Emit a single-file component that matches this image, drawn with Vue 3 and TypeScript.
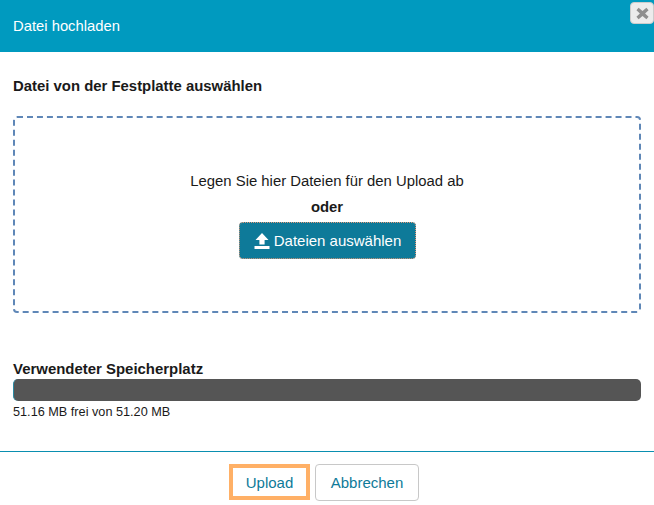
<script setup lang="ts">
const title = 'Datei hochladen'
</script>

<template>
  <div class="modal">
    <header class="head">
      <h1>{{ title }}</h1>
      <button class="close" aria-label="Schließen">
        <svg width="13" height="13" viewBox="0 0 12 12"><path d="M2.4.8 6 3.8 9.6.8 11.6 3 8.4 6l3.2 3-2 2.2L6 8.2l-3.6 3L.4 9l3.2-3L.4 3Z" fill="#8f8f8f"/></svg>
      </button>
    </header>
    <main class="body">
      <h2>Datei von der Festplatte auswählen</h2>
      <section class="drop">
        <p class="hint">Legen Sie hier Dateien für den Upload ab</p>
        <p class="or">oder</p>
        <button class="pick">
          <svg width="16" height="16" viewBox="0 0 16 16"><path d="M8 0 14.5 7H10.6V11.5H5.4V7H1.5Z M.5 13H15.5V16H.5Z" fill="#fff"/></svg>
          <span>Dateien auswählen</span>
        </button>
      </section>
      <h3>Verwendeter Speicherplatz</h3>
      <div class="bar"></div>
      <p class="free">51.16 MB frei von 51.20 MB</p>
    </main>
    <footer class="foot">
      <button class="btn focus">Upload</button>
      <button class="btn">Abbrechen</button>
    </footer>
  </div>
</template>

<style>
html, body { margin: 0; background: #fff; }
</style>

<style scoped>
.modal {
  position: relative;
  width: 654px;
  height: 505px;
  overflow: hidden;
  font-family: "Liberation Sans", Arial, sans-serif;
  color: #1a1a1a;
  background: #fff;
}
.head {
  height: 52px;
  background: #009abf;
  display: flex;
  align-items: center;
  padding: 0 13px;
}
.head h1 {
  margin: 0;
  font-size: 14.8px;
  font-weight: 400;
  color: #fff;
}
.close {
  position: absolute;
  top: 2px;
  right: 0;
  width: 24px;
  height: 22px;
  padding: 0;
  border: 1px solid #ccc;
  border-radius: 4px;
  background: #ececec;
  display: flex;
  align-items: center;
  justify-content: center;
}
.body {
  padding: 0 13px;
  height: 399px;
  box-sizing: border-box;
  overflow: hidden;
}
h2 {
  margin: 26px 0 22px;
  font-size: 14.9px;
  line-height: 16px;
  font-weight: 700;
}
.drop {
  height: 197px;
  box-sizing: border-box;
  border: 2px dashed #5f87b7;
  border-radius: 4px;
  padding-top: 54px;
  display: flex;
  flex-direction: column;
  align-items: center;
}
.hint {
  margin: 0;
  font-size: 14.87px;
  line-height: 18px;
}
.or {
  margin: 8px 0 6px;
  font-size: 14.87px;
  line-height: 18px;
  font-weight: 700;
}
.pick {
  width: 177px;
  height: 37px;
  border: 1px dotted #e39a78;
  border-radius: 4px;
  background: #0e7a99;
  color: #fff;
  font: 15px "Liberation Sans", Arial, sans-serif;
  display: flex;
  align-items: center;
  justify-content: center;
  gap: 4px;
  padding: 0 0 0 1px;
}
h3 {
  margin: 47px 0 0;
  font-size: 14.95px;
  line-height: 18px;
  font-weight: 700;
}
.bar {
  height: 22px;
  margin-top: 1px;
  background: #555;
  border-radius: 5px;
  border-left: 1px solid #2a8aa3;
  box-sizing: border-box;
}
.free {
  margin: 4px 0 0;
  font-size: 12.7px;
  line-height: 15px;
}
.foot {
  border-top: 1px solid #0a8fb0;
  padding: 12px 6px 0 0;
  display: flex;
  justify-content: center;
  gap: 5px;
}
.btn {
  height: 37px;
  width: 104px;
  padding: 0;
  border: 1px solid #c8c8c8;
  border-radius: 4px;
  background: #fff;
  color: #0e7a99;
  font: 15px "Liberation Sans", Arial, sans-serif;
}
.btn.focus {
  width: 81px;
  height: 36px;
  border: 4px solid #ffb066;
  border-radius: 0;
  padding: 0;
}
</style>
